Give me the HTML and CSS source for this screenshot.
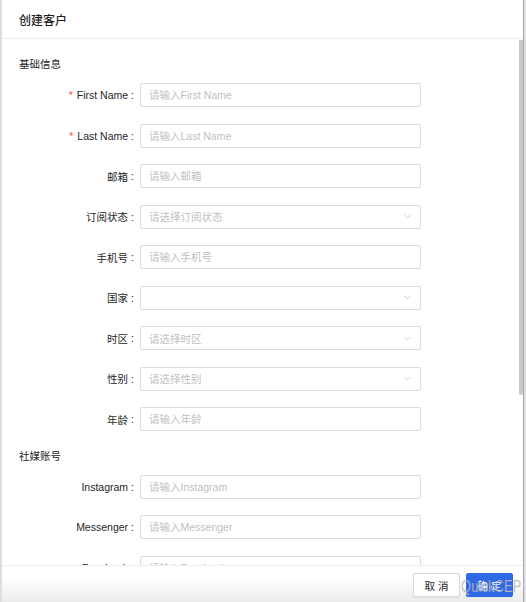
FILE: index.html
```html
<!DOCTYPE html>
<html lang="zh-CN">
<head>
<meta charset="utf-8">
<title>创建客户</title>
<link rel="stylesheet" href="styles.css">
</head>
<body>
<div class="dialog">
  <div class="dialog-header">创建客户</div>
  <div class="dialog-body">
    <div class="section-title">基础信息</div>
    <div class="row"><label class="label required">First Name</label><input class="input" placeholder="请输入First Name"></div>
    <div class="row"><label class="label required">Last Name</label><input class="input" placeholder="请输入Last Name"></div>
    <div class="row"><label class="label">邮箱</label><input class="input" placeholder="请输入邮箱"></div>
    <div class="row"><label class="label">订阅状态</label><div class="select"><span class="ph">请选择订阅状态</span><svg class="arrow" viewBox="0 0 8 5"><path d="M0.5 0.5 L4 4 L7.5 0.5" /></svg></div></div>
    <div class="row"><label class="label">手机号</label><input class="input" placeholder="请输入手机号"></div>
    <div class="row"><label class="label">国家</label><div class="select"><span class="ph"></span><svg class="arrow" viewBox="0 0 8 5"><path d="M0.5 0.5 L4 4 L7.5 0.5" /></svg></div></div>
    <div class="row"><label class="label">时区</label><div class="select"><span class="ph">请选择时区</span><svg class="arrow" viewBox="0 0 8 5"><path d="M0.5 0.5 L4 4 L7.5 0.5" /></svg></div></div>
    <div class="row"><label class="label">性别</label><div class="select"><span class="ph">请选择性别</span><svg class="arrow" viewBox="0 0 8 5"><path d="M0.5 0.5 L4 4 L7.5 0.5" /></svg></div></div>
    <div class="row"><label class="label">年龄</label><input class="input" placeholder="请输入年龄"></div>
    <div class="section-title">社媒账号</div>
    <div class="row"><label class="label">Instagram</label><input class="input" placeholder="请输入Instagram"></div>
    <div class="row"><label class="label">Messenger</label><input class="input" placeholder="请输入Messenger"></div>
    <div class="row"><label class="label">Facebook</label><input class="input" placeholder="请输入Facebook"></div>
    <div class="row"><label class="label">Twitter</label><input class="input" placeholder="请输入Twitter"></div>
    <div class="row"><label class="label">WhatsApp</label><input class="input" placeholder="请输入WhatsApp"></div>
    <div class="row"><label class="label">LinkedIn</label><input class="input" placeholder="请输入LinkedIn"></div>
  </div>
  <div class="scroll-thumb"></div>
  <div class="dialog-footer">
    <button class="btn">取 消</button>
    <button class="btn btn-primary">确 定</button>
    <span class="watermark">QuickCEP</span>
  </div>
</div>
</body>
</html>
```
FILE: styles.css
```css
html, body {
  margin: 0;
  padding: 0;
  height: 100%;
}
body {
  background: #dedede;
  font-family: "Liberation Sans", "Noto Sans CJK SC", sans-serif;
  color: #262626;
  overflow: hidden;
}
.dialog {
  position: relative;
  margin-left: 2px;
  width: 521px;
  height: 602px;
  background: #fff;
  border-right: 1px solid #a9a9a9;
  display: flex;
  flex-direction: column;
}
.dialog-header {
  height: 38px;
  border-bottom: 1px solid #ececec;
  padding-left: 17px;
  display: flex;
  align-items: center;
  font-size: 12px;
  font-weight: 500;
  color: #1f1f1f;
  flex: none;
}
.dialog-body {
  height: 526px;
  flex: none;
  overflow: hidden;
  padding: 17px 0 20px 17px;
  box-sizing: border-box;
}
.scroll-thumb {
  position: absolute;
  right: 0;
  top: 40px;
  width: 4px;
  height: 355px;
  background: #c9c9c9;
  border-radius: 0 0 2px 2px;
}
.section-title {
  height: 16px;
  line-height: 16px;
  font-size: 10.5px;
  color: #262626;
  margin-bottom: 11px;
}
.row {
  display: flex;
  align-items: center;
  height: 24px;
  margin-bottom: 16.5px;
}
.label {
  width: 121px;
  flex: none;
  display: flex;
  justify-content: flex-end;
  align-items: center;
  font-size: 10.5px;
  color: #262626;
  white-space: nowrap;
}
.label.required::before {
  content: "*";
  color: #ff4d4f;
  margin-right: 4px;
  font-size: 10.5px;
}
.label::after {
  content: ":";
  margin: 0 6px 0 3px;
}
.input, .select {
  width: 281px;
  height: 24px;
  box-sizing: border-box;
  border: 1px solid #dcdcdc;
  border-radius: 2px;
  padding: 0 8px;
  font-family: "Liberation Sans", "Noto Sans CJK SC", sans-serif;
  font-size: 10.5px;
  color: #262626;
  background: #fff;
  outline: none;
}
.input::placeholder {
  color: #bfbfbf;
}
.select {
  display: flex;
  align-items: center;
  justify-content: space-between;
}
.ph {
  color: #bfbfbf;
}
.arrow {
  width: 7px;
  height: 5px;
  fill: none;
  stroke: #bfbfbf;
  stroke-width: 0.9;
  margin-right: 1px;
}
.dialog-footer {
  position: relative;
  flex: none;
  height: 37px;
  box-sizing: border-box;
  border-top: 1px solid #eeeeee;
  padding: 7px 10px 0 0;
  display: flex;
  justify-content: flex-end;
  align-items: flex-start;
  gap: 6px;
  background: linear-gradient(to bottom, #ffffff 0%, #ffffff 35%, #ececec 100%);
}
.btn {
  width: 47px;
  height: 24px;
  box-sizing: border-box;
  border: 1px solid #d9d9d9;
  border-radius: 2px;
  background: #fff;
  font-family: "Liberation Sans", "Noto Sans CJK SC", sans-serif;
  font-size: 10.5px;
  color: #262626;
  padding: 0;
  box-shadow: 0 1px 2px rgba(0, 0, 0, 0.06);
}
.btn-primary {
  background: #2f6ae6;
  border-color: #2f6ae6;
  color: #fff;
}
.watermark {
  position: absolute;
  z-index: 2;
  right: 2px;
  bottom: 6px;
  font-family: "Liberation Sans", sans-serif;
  font-size: 16px;
  letter-spacing: 0.2px;
  color: rgba(185, 185, 185, 0.9);
  transform: scaleX(0.8);
  transform-origin: right bottom;
  pointer-events: none;
}
```
